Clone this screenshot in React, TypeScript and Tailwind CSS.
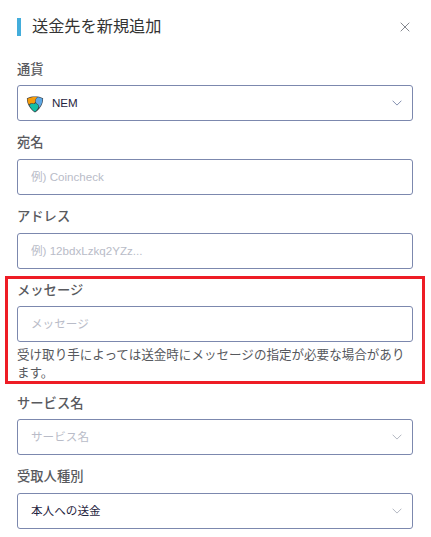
import React from "react";

interface FieldProps {
  label: string;
  className?: string;
  labelClassName?: string;
  children: React.ReactNode;
}

function Field({ label, className = "pt-[12px]", labelClassName = "h-[26px]", children }: FieldProps) {
  return (
    <div className={`relative ${className}`}>
      <label className={`block text-[13.3px] leading-[20px] font-medium text-[#595a5e] ${labelClassName}`}>
        {label}
      </label>
      {children}
    </div>
  );
}

function TextInput({ placeholder }: { placeholder: string }) {
  return (
    <input
      type="text"
      placeholder={placeholder}
      className="block h-9 w-full rounded-[3px] border border-[#7c88ae] bg-white px-[13px] pb-[2px] text-[11.6px] text-[#1f2440] outline-none placeholder:text-[#b9bcc8]"
    />
  );
}

interface SelectBoxProps {
  arrow?: string;
  children: React.ReactNode;
}

function SelectBox({ arrow = "text-[#b4b8c2]", children }: SelectBoxProps) {
  return (
    <button
      type="button"
      className="flex h-9 w-full items-center justify-between rounded-[3px] border border-[#7c88ae] bg-white pr-[10px] pl-[13px] text-[11.6px]"
    >
      {children}
      <svg width="10" height="6" viewBox="0 0 10 6" fill="none" className={arrow}>
        <path d="M0.6 0.7L5 5.1L9.4 0.7" stroke="currentColor" strokeWidth="1" />
      </svg>
    </button>
  );
}

function NemIcon() {
  return (
    <svg width="18" height="17" viewBox="0 0 18 17" className="mt-[2px]">
      <path
        d="M0.900 2.200C3.500 0.900 6 .5 9 .5s5.500.400 8.100 1.700C17.200 8 14 13 9 16.500 4 13 0.800 8 0.900 2.200Z"
        fill="#3b3f45"
      />
      <path d="M1.500 2.700C4.500 1.200 8 .8 11.300 1.200 9.500 2.300 9.200 3.900 9.300 5.700 8.900 7.300 7.500 7.700 6.200 7.300 4.600 7 3.500 7.800 3 8.800 2 7 1.500 5 1.500 2.700Z" fill="#f59b0b" />
      <path d="M12 1.300C13.800 1.500 15.300 2 16.500 2.700 16.500 6.500 15.100 9.500 12.900 12 13.200 10.300 12.900 9 11.500 8 9.800 7 9.400 5.800 9.800 4.200 10 2.800 10.700 1.900 12 1.300Z" fill="#5ea8e5" />
      <path d="M3.500 9.500C4.200 8.200 5.300 7.600 6.800 7.900 8.200 8.100 9.200 7.600 9.700 6.900 10.500 8.200 12.200 8.400 12.400 10 12.500 11.800 11.300 13.900 9 15.800 6.600 14.100 4.800 12 3.500 9.500Z" fill="#12bfa5" />
    </svg>
  );
}

export default function App() {
  return (
    <div className="h-[537px] w-[431px] overflow-hidden bg-white pr-[18px] pl-[17px] font-['Liberation_Sans','Noto_Sans_CJK_JP',sans-serif]">
      <header className="flex h-[48px] items-center justify-between pt-[6px]">
        <div className="flex items-center">
          <span className="h-[18px] w-1 bg-[#43addb]" />
          <h1 className="ml-[11px] pb-[2px] text-[16.2px] leading-6 text-[#333]">送金先を新規追加</h1>
        </div>
        <button type="button" aria-label="閉じる" className="mr-[3px]">
          <svg width="10" height="10" viewBox="0 0 10 10" fill="none">
            <path d="M0.700 0.700L9.300 9.300M9.300 0.700L0.700 9.300" stroke="#85888f" strokeWidth="1" />
          </svg>
        </button>
      </header>

      <Field label="通貨" labelClassName="h-[25px]">
        <SelectBox arrow="text-[#8490b0]">
          <span className="-ml-[5px] flex items-center gap-2 text-[#1f2440]">
            <NemIcon />
            NEM
          </span>
        </SelectBox>
      </Field>

      <Field label="宛名">
        <TextInput placeholder="例) Coincheck" />
      </Field>

      <Field label="アドレス">
        <TextInput placeholder="例) 12bdxLzkq2YZz..." />
      </Field>

      <Field label="メッセージ" labelClassName="h-[25px]">
        <TextInput placeholder="メッセージ" />
        <p className="-mr-[2px] h-[41px] pt-[4px] text-[12.55px] leading-[18px] text-[#56585d]">
          受け取り手によっては送金時にメッセージの指定が必要な場合があります。
        </p>
        {/* highlight frame */}
        <div className="pointer-events-none absolute top-[7px] -right-[12px] h-[108px] -left-[12px] border-3 border-[#ee1c25]" />
      </Field>

      <Field label="サービス名" className="pt-[11px]" labelClassName="h-[25px]">
        <SelectBox>
          <span className="text-[#b9bcc8]">サービス名</span>
        </SelectBox>
      </Field>

      <Field label="受取人種別">
        <SelectBox>
          <span className="text-[#1f2440]">本人への送金</span>
        </SelectBox>
      </Field>
    </div>
  );
}
